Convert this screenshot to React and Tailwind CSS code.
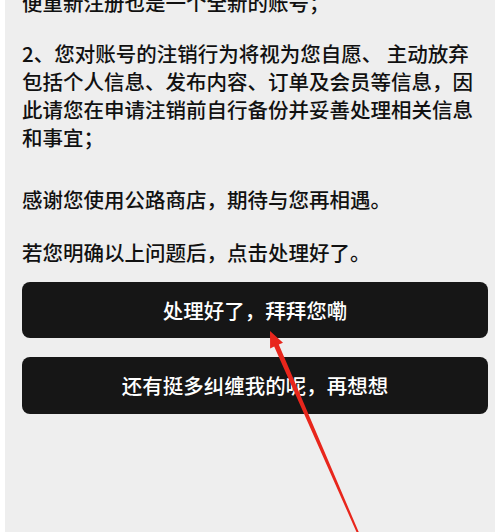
import React from 'react'

const font = { fontFamily: '"Noto Sans CJK SC", "Noto Sans", sans-serif' }

// red markup arrow drawn over the page
const Arrow = () => (
  <svg className="absolute inset-0 pointer-events-none" width="495" height="532" viewBox="0 0 495 532">
    <polygon
      points="270,331 283,342.8 278.8,344.6 360.2,535.5 358.4,536.3 274.2,346.6 270.1,348.4"
      fill="#e8261c"
    />
  </svg>
)

export default function App() {
  return (
    <div className="relative w-full h-[532px] bg-white overflow-hidden" style={font}>
      <div className="ml-[5px] h-full bg-[#eeeeee] pl-[17px] pr-[7px] overflow-hidden">
        <div className="text-[20.5px] leading-[28px] font-medium text-[#111111]">
          <p className="mt-[-12px]">便重新注册也是一个全新的账号；</p>
          <p className="mt-[23px]">
            2、您对账号的注销行为将视为您自愿、 主动放弃<br />
            包括个人信息、发布内容、订单及会员等信息，因<br />
            此请您在申请注销前自行备份并妥善处理相关信息<br />
            和事宜；
          </p>
          <p className="mt-[34px]">感谢您使用公路商店，期待与您再相遇。</p>
          <p className="mt-[25px]">若您明确以上问题后，点击处理好了。</p>
        </div>
        <div className="mt-[16px] flex flex-col gap-[19px]">
          <button className="h-[56px] w-full rounded-lg bg-[#161616] text-white text-[20.5px] font-medium">
            处理好了，拜拜您嘞
          </button>
          <button className="h-[57px] w-full rounded-lg bg-[#161616] text-white text-[20.5px] font-medium">
            还有挺多纠缠我的呢，再想想
          </button>
        </div>
      </div>
      <Arrow />
    </div>
  )
}
